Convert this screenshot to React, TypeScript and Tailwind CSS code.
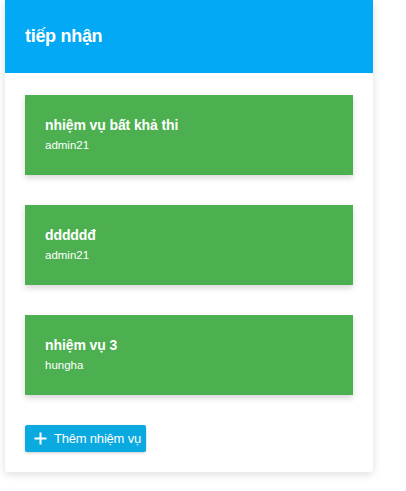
import React from "react";

const tasks = [
  { title: "nhiệm vụ bất khả thi", user: "admin21" },
  { title: "dddddđ", user: "admin21" },
  { title: "nhiệm vụ 3", user: "hungha" },
];

export default function App() {
  return (
    <div className="w-[406px] h-[491px] bg-white overflow-hidden" style={{ fontFamily: '"Liberation Sans", Arial, sans-serif' }}>
      <div className="ml-[5px] w-[368px] bg-white rounded-b-[3px] shadow-[0_2px_8px_rgba(0,0,0,0.14)] overflow-hidden">
        <div className="h-[73px] bg-[#03a9f4] flex items-center px-5">
          <span className="text-white text-[18px] font-semibold tracking-[-0.3px]">tiếp nhận</span>
        </div>
        <div className="px-5 pt-[22px] pb-5 flex flex-col">
          <div className="flex flex-col gap-[30px]">
            {tasks.map((t) => (
              <div key={t.title} className="h-[80px] bg-[#4caf50] shadow-[0_3px_6px_rgba(0,0,0,0.16)] px-5 pt-[21px] text-white">
                <div className="text-[14px] font-bold leading-[18px] tracking-[-0.1px]">{t.title}</div>
                <div className="text-[11.5px] leading-[14px] mt-[4px]">{t.user}</div>
              </div>
            ))}
          </div>
          <div className="mt-[30px]">
            <button className="h-[27px] pl-[9px] pr-[5px] bg-[#0aa9e0] rounded-[2px] shadow-[0_1px_3px_rgba(0,0,0,0.2)] text-white flex items-center gap-[7px]">
              <svg width="13" height="13" viewBox="0 0 13 13">
                <path d="M6.5 0.5V12.5M0.5 6.5H12.5" stroke="white" strokeWidth="2" />
              </svg>
              <span className="text-[13px] tracking-[-0.2px]">Thêm nhiệm vụ</span>
            </button>
          </div>
        </div>
      </div>
    </div>
  );
}
